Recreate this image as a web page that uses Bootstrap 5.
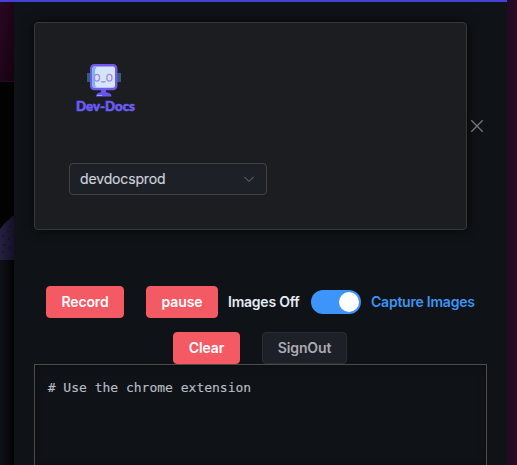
<!DOCTYPE html>
<html lang="en" data-bs-theme="dark">
<head>
<meta charset="utf-8">
<meta name="viewport" content="width=device-width, initial-scale=1">
<title>Dev-Docs</title>
<link href="https://cdn.jsdelivr.net/npm/bootstrap@5.3.0/dist/css/bootstrap.min.css" rel="stylesheet">
<style>
html,body{height:100%;overflow:hidden}
body{background:#000;font-family:Inter,"Liberation Sans",sans-serif;font-size:14px;line-height:22px}
.topline{height:2px;background:#4341d6;width:507px}
.side-left{width:14px;background:#060609}
.side-left svg{display:block}
.side-right{width:10px;margin-top:-2px;background:linear-gradient(90deg,#230a22,#2c0a29)}
.panel{width:493px;padding:20px 20px 0;background:#0f1317}
.account{width:433px;height:208px;padding:38px 34px 0;background:#1c1d20;border:1px solid #37383b;border-radius:4px;box-shadow:0 0 12px rgba(0,0,0,.72)}
.picker{width:198px;height:32px;margin-top:38px;padding:0 10px;background:#1d2027;border:1px solid #414244;border-radius:4px;color:#cfd3dc;letter-spacing:-.14px;-webkit-text-stroke:.15px}
.dismiss{width:20px;height:20px;border:0;background:none;color:#76787d}
.controls{margin-top:56px;padding-left:12px;height:32px}
.act{height:32px;padding:0;font-size:14px;line-height:20px;font-weight:600;letter-spacing:-.12px;border-radius:4px;--bs-btn-color:#fff;--bs-btn-bg:#f45a63;--bs-btn-border-color:#f45a63}
.act-plain{--bs-btn-color:#a9abb2;--bs-btn-bg:#1d2027;--bs-btn-border-color:#2b2d33}
.w-record{width:78px}.w-pause{width:72px;margin-left:22px}.w-clear{width:67px}.w-sign{width:85px;margin-left:22px}
.lab{font-weight:600;letter-spacing:-.23px;white-space:nowrap}
.lab-off{color:#e5eaf3;margin-left:10px;width:73px}
.lab-on{color:#3d94f3;margin-left:10px}
.toggle{width:50px;height:24px;margin-left:10px;padding:2px;border-radius:12px;background:#3d94fa}
.knob{width:20px;height:20px;border-radius:50%;background:#fff}
.second{margin-top:14px;padding-left:139px}
.editor{width:453px;height:101px;padding:13px 12px 0 12.700px;border:1px solid #4d4c4a;border-bottom:0;box-shadow:inset 0 0 10px rgba(0,0,0,.3);font:13px/20px "DejaVu Sans Mono",monospace;color:#b9bbc2;white-space:pre;-webkit-text-stroke:.15px}
</style>
</head>
<body>
<div class="topline"></div>
<div class="d-flex h-100">
  <aside class="side-left flex-shrink-0">
    <svg width="14" height="463" viewBox="0 2 14 463">
      <defs>
        <linearGradient id="plum" x2="1" y2="1"><stop stop-color="#280822"/><stop offset="1" stop-color="#130310"/></linearGradient>
        <linearGradient id="dusk" x2="1"><stop stop-color="#101018"/><stop offset=".5" stop-color="#0a0a10"/><stop offset="1" stop-color="#020203"/></linearGradient>
        <linearGradient id="hill" x2="1"><stop stop-color="#25203f"/><stop offset="1" stop-color="#151127"/></linearGradient>
      </defs>
      <path fill="#020203" d="M0 0h14v465H0z"/>
      <path fill="url(#plum)" d="M0 2h14v79H0z"/>
      <path fill="#260b20" d="M0 81h14v1H0z"/>
      <path fill="url(#hill)" d="M0 229l5-6 9-8v45H0z"/>
      <path fill="url(#dusk)" d="M0 260h14v205H0z"/>
      <path stroke="#110d20" d="M2 236h2m3-5h2m-6 14h3m2-6h2m-8 13h2m4-4h3m-2-21h2"/>
    </svg>
  </aside>
  <main class="panel flex-shrink-0">
    <div class="d-flex align-items-center">
      <section class="account flex-shrink-0">
        <svg class="d-block" width="80" height="64" viewBox="69 61 80 64" role="img" aria-label="Dev-Docs">
          <path fill="#335b7c" d="M87 73h4v9h-4zM117 73h4v9h-4z"/>
          <rect x="91.2" y="65.2" width="25" height="23.8" rx="3.2" fill="#d4e5f8" stroke="#7458ee" stroke-width="2.4"/>
          <path d="M95 66.5h-1q-1.5 0-1.5 2v17q0 2 1.5 2h3q-2-1-2-4v-12q0-3 2-5z" fill="#77b6ef"/>
          <g fill="none" stroke="#a68be3" stroke-width="1.3"><ellipse cx="97" cy="77.7" rx="2.6" ry="3.4"/><ellipse cx="109.4" cy="77.7" rx="2.6" ry="3.4"/><path d="M101 81.5q2 1 4.6 0"/></g>
          <path fill="#6657ee" d="M101 90h5v2.300q5.500 .5 5.500 4.200H96q0-3.700 5-4.200z"/>
          <path fill="#aaa0f4" d="M97 95h5v1h-5z"/>
          <text x="76" y="110.500" textLength="59" lengthAdjust="spacingAndGlyphs" font-family="Lato,sans-serif" font-weight="900" font-size="13.500" fill="#6a5cf5" stroke="#6a5cf5" stroke-width=".6">Dev-Docs</text>
        </svg>
        <div class="picker d-flex align-items-center justify-content-between" role="combobox" aria-label="Project">
          <span>devdocsprod</span>
          <svg width="14" height="14" viewBox="0 0 14 14" fill="none" stroke="#737579"><path d="M2.300 4.800L7 9.500l4.700-4.700"/></svg>
        </div>
      </section>
      <button class="dismiss d-flex align-items-center justify-content-center p-0" aria-label="Close">
        <svg width="14" height="14" viewBox="0 0 14 14" fill="none" stroke="currentColor" stroke-width="1.250"><path d="M1.300 1.300l11.400 11.400M12.700 1.300L1.300 12.700"/></svg>
      </button>
    </div>
    <div class="controls d-flex align-items-center">
      <button class="btn act w-record">Record</button>
      <button class="btn act w-pause">pause</button>
      <span class="lab lab-off">Images Off</span>
      <div class="toggle d-flex justify-content-end align-items-center" role="switch" aria-checked="true"><div class="knob"></div></div>
      <span class="lab lab-on">Capture Images</span>
    </div>
    <div class="second d-flex">
      <button class="btn act w-clear">Clear</button>
      <button class="btn act act-plain w-sign">SignOut</button>
    </div>
    <div class="editor"># Use the chrome extension</div>
  </main>
  <aside class="side-right flex-shrink-0"></aside>
</div>
<script src="https://cdn.jsdelivr.net/npm/bootstrap@5.3.0/dist/js/bootstrap.bundle.min.js"></script>
</body>
</html>
